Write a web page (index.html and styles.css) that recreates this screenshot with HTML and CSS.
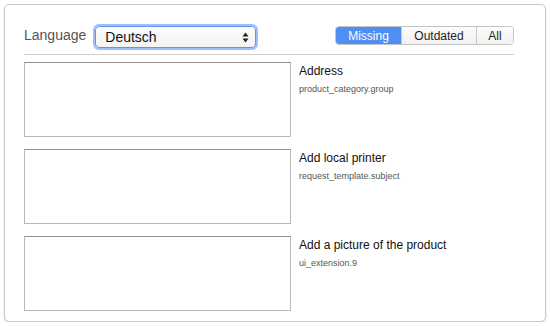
FILE: index.html
```html
<!DOCTYPE html>
<html>
<head>
<meta charset="utf-8">
<link rel="stylesheet" href="styles.css">
</head>
<body>
<div class="card">
  <div class="toolbar">
    <div class="lang">
      <span class="lang-label">Language</span>
      <div class="select">
        <span>Deutsch</span>
        <svg class="arrows" width="7" height="11" viewBox="0 0 7 11"><path d="M3.5 0.5 L6.5 4.5 L0.5 4.5 Z M3.5 10.5 L6.5 6.5 L0.5 6.5 Z" fill="#222"/></svg>
      </div>
    </div>
    <div class="seg">
      <span class="seg-item active">Missing</span>
      <span class="seg-item">Outdated</span>
      <span class="seg-item">All</span>
    </div>
  </div>
  <div class="rule"></div>
  <div class="rows">
    <div class="row">
      <div class="area"></div>
      <div class="info">
        <div class="title">Address</div>
        <div class="key">product_category.group</div>
      </div>
    </div>
    <div class="row">
      <div class="area"></div>
      <div class="info">
        <div class="title">Add local printer</div>
        <div class="key">request_template.subject</div>
      </div>
    </div>
    <div class="row">
      <div class="area"></div>
      <div class="info">
        <div class="title">Add a picture of the product</div>
        <div class="key">ui_extension.9</div>
      </div>
    </div>
  </div>
</div>
</body>
</html>
```
FILE: styles.css
```css
html, body {
  margin: 0;
  padding: 0;
  background: #ffffff;
  font-family: "Liberation Sans", Arial, sans-serif;
}
body {
  padding: 4px 4px 0 4px;
}
.card {
  width: 542px;
  height: 318px;
  box-sizing: border-box;
  border: 1px solid #c8c8c8;
  border-radius: 5px;
  box-shadow: 0 1px 2px rgba(0,0,0,0.12);
  background: #fff;
  padding: 20px 31px 0 19px;
  overflow: hidden;
}
.toolbar {
  display: flex;
  justify-content: space-between;
  align-items: flex-start;
  height: 29px;
}
.lang {
  display: flex;
  align-items: center;
}
.lang-label {
  font-size: 14px;
  color: #555;
  margin-right: 9px;
  position: relative;
  top: -2px;
}
.select {
  width: 161px;
  height: 22px;
  box-sizing: border-box;
  border: 1px solid #5d95ef;
  border-radius: 4px;
  box-shadow: 0 0 0 2px #9fc0f7;
  background: linear-gradient(#fdfdfd, #f3f3f3);
  display: flex;
  align-items: center;
  justify-content: space-between;
  padding: 0 6px 0 9px;
  font-size: 14px;
  color: #111;
  margin-top: 1px;
}
.seg {
  display: flex;
  height: 19px;
  box-sizing: border-box;
  border: 1px solid #c4c4c4;
  border-radius: 4px;
  overflow: hidden;
  font-size: 12px;
  margin-top: 1px;
}
.seg-item {
  display: flex;
  align-items: center;
  justify-content: center;
  color: #222;
  background: linear-gradient(#fcfcfc, #f2f2f2);
  border-left: 1px solid #c8c8c8;
}
.seg-item:nth-child(1) { width: 65px; border-left: none; }
.seg-item:nth-child(2) { width: 74px; }
.seg-item:nth-child(3) { width: 36px; }
.seg-item.active {
  background: #4f8ef3;
  color: #fff;
}
.rule {
  height: 1px;
  background: #cfcfcf;
  margin-bottom: 7px;
}
.rows {
  display: flex;
  flex-direction: column;
  gap: 12px;
}
.row {
  display: flex;
  align-items: flex-start;
}
.area {
  width: 267px;
  height: 75px;
  box-sizing: border-box;
  border: 1px solid #b9b9b9;
  border-top-color: #8f8f8f;
  background: #fff;
  flex-shrink: 0;
}
.info {
  margin-left: 8px;
  padding-top: 2px;
}
.title {
  font-size: 12px;
  color: #111;
  line-height: 14px;
}
.key {
  font-size: 9px;
  color: #555;
  margin-top: 6px;
  line-height: 11px;
}
```
